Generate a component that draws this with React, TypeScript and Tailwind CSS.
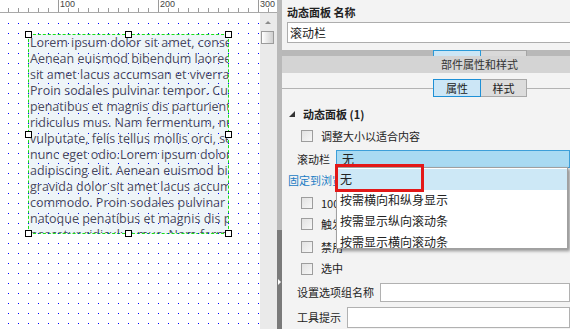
import React from 'react'

const cjk = '"Noto Sans CJK SC", "Noto Sans", sans-serif'

const loremLines = [
  'Lorem ipsum dolor sit amet, consectetur',
  'Aenean euismod bibendum laoreet. Proin',
  'sit amet lacus accumsan et viverra justo',
  'Proin sodales pulvinar tempor. Cum sociis',
  'penatibus et magnis dis parturient montes',
  'ridiculus mus. Nam fermentum, nulla luctus',
  'vulputate, felis tellus mollis orci, sed rhoncus',
  'nunc eget odio.Lorem ipsum dolor sit amet',
  'adipiscing elit. Aenean euismod bibendum',
  'gravida dolor sit amet lacus accumsan et',
  'commodo. Proin sodales pulvinar tempor',
  'natoque penatibus et magnis dis parturient',
  'nascetur ridiculus mus. Nam fermentum',
]

const dropdownItems = ['无', '按需横向和纵身显示', '按需显示纵向滚动条', '按需显示横向滚动条']

function Ruler() {
  const ticks = Array.from({ length: 27 }, (_, i) => 8 + i * 10)
  return (
    <div className="relative h-[13px] w-[277px] border-b border-[#a9a9a9] bg-white">
      <svg className="absolute inset-0" width={277} height={13} shapeRendering="crispEdges">
        {ticks.map((x) => {
          const long = (x - 58) % 100 === 0
          return (
            <line
              key={x}
              x1={x + 0.5}
              x2={x + 0.5}
              y1={long ? 0 : 8}
              y2={12}
              stroke="#9a9a9a"
              strokeWidth={1}
            />
          )
        })}
      </svg>
      {[100, 200, 300].map((n, i) => (
        <span
          key={n}
          className="absolute top-0 text-[9px] leading-[9px] text-[#444]"
          style={{ left: 60 + i * 100, fontFamily: '"Liberation Sans", sans-serif' }}
        >
          {n}
        </span>
      ))}
    </div>
  )
}

function Handle({ x, y }: { x: number; y: number }) {
  return (
    <div
      className="absolute h-[7px] w-[7px] border border-black bg-white"
      style={{ left: x - 3, top: y - 3 }}
    />
  )
}

function Canvas() {
  const cols = Array.from({ length: 26 }, (_, i) => 8 + i * 10)
  const rows = Array.from({ length: 31 }, (_, i) => 10 + i * 10)
  return (
    <div className="relative h-[316px] w-[260px] overflow-hidden bg-white">
      {/* text panel */}
      <div className="absolute left-[28px] top-[21px] h-[200px] w-[201px] overflow-hidden border border-dashed border-[#19e019] bg-[#eef5f8]">
        {loremLines.map((line) => (
          <div
            key={line}
            className="h-[16px] whitespace-nowrap pl-px text-[12.5px] leading-[16px] text-[#4c4c5e]"
            style={{ fontFamily: '"Open Sans", sans-serif' }}
          >
            {line}
          </div>
        ))}
      </div>

      {/* dot grid, drawn over the widget like the editor does */}
      <svg className="pointer-events-none absolute inset-0" width={260} height={316} shapeRendering="crispEdges">
        {rows.map((y) =>
          cols.map((x) => <rect key={`${x}-${y}`} x={x} y={y} width={1} height={1} fill="#0000ff" />)
        )}
      </svg>

      <Handle x={28} y={21} />
      <Handle x={128} y={21} />
      <Handle x={228} y={21} />
      <Handle x={28} y={121} />
      <Handle x={228} y={121} />
      <Handle x={28} y={220} />
      <Handle x={128} y={220} />
      <Handle x={228} y={220} />
    </div>
  )
}

function Scrollbar() {
  return (
    <div className="relative h-[316px] w-[17px] bg-[#eaeaea]">
      <div className="absolute left-[5px] top-[8px] h-0 w-0 border-x-[3px] border-b-[3px] border-x-transparent border-b-[#8a8a8a]" />
      <div className="absolute left-[1px] top-[18px] h-[13px] w-[13px] border border-[#9b9b9b] bg-gradient-to-r from-white to-[#cfcfcf]" />
    </div>
  )
}

function Checkbox() {
  return <div className="h-[12px] w-[12px] shrink-0 border border-[#9d9d9d] bg-gradient-to-br from-[#e2e2e2] to-[#f7f7f7]" />
}

function CheckRow({ label, h, mt = 0 }: { label: string; h: number; mt?: number }) {
  return (
    <div className="flex items-center gap-[8px] pl-[19px]" style={{ height: h, marginTop: mt }}>
      <Checkbox />
      <span className="whitespace-nowrap">{label}</span>
    </div>
  )
}

function RightPanel() {
  return (
    <div
      className="relative h-[329px] flex-1 overflow-hidden bg-[#f3f3f3] text-[11px] text-[#222]"
      style={{ fontFamily: cjk }}
    >
      {/* name section */}
      <div className="h-[50px] pl-[5px] pt-[3px]">
        <div className="h-[18px] font-bold leading-[18px]">动态面板 名称</div>
        <div className="mt-px h-[21px] w-[300px] border border-[#adadad] bg-white pl-[2px] text-[12px] leading-[19px]">
          滚动栏
        </div>
      </div>

      {/* grey band with peeking tabs */}
      <div className="flex h-[6px] bg-[#b8b8b8] pl-[151px]">
        <div className="h-[6px] w-[48px] border-x border-t border-[#2b9ad8] bg-[#cce6f5]" />
        <div className="h-[6px] w-[46px] border-r border-t border-[#a5a5a5] bg-[#d9d9d9]" />
      </div>

      {/* header */}
      <div className="h-[17px] bg-[#d4d4d4] pl-[159px] leading-[17px] text-[#333]">部件属性和样式</div>

      {/* tabs */}
      <div className="flex h-[24px]">
        <div className="h-[16px] w-[151px] border-b border-[#b3b3b3]" />
        <div className="mt-[6px] flex h-[18px] w-[48px] items-center justify-center border border-[#1e90d6] bg-[#cce6f6]">
          属性
        </div>
        <div className="mt-[6px] flex h-[18px] w-[46px] items-center justify-center border border-l-0 border-[#a8a8a8] bg-[#dcdcdc]">
          样式
        </div>
        <div className="h-[16px] flex-1 border-b border-[#b3b3b3]" />
      </div>

      {/* properties */}
      <div className="mt-[7px]">
        <div className="flex h-[20px] items-center pl-[7px] font-bold">
          <span className="mr-[8px] h-0 w-0 border-b-[6px] border-l-[6px] border-b-[#333] border-l-transparent" />
          动态面板 (1)
        </div>
        <CheckRow label="调整大小以适合内容" h={20} mt={2} />
        <div className="mt-[4px] flex h-[18px] items-center">
          <span className="w-[54px] pl-[15px]">滚动栏</span>
          <div className="h-[18px] flex-1 border border-[#3d9fd9] bg-[#a9daf2] pl-[5px] text-[12px] leading-[16px]">无</div>
        </div>
        <div className="mt-[2px] flex h-[20px] items-center whitespace-nowrap pl-[6px] text-[#1b7cc4]">固定到浏览器</div>
        <CheckRow label="100%宽度(仅限浏览器中有效)" h={20} mt={3} />
        <CheckRow label="触发鼠标交互" h={22} mt={0} />
        <CheckRow label="禁用" h={22} mt={1} />
        <CheckRow label="选中" h={21} mt={0} />
        <div className="mt-[4px] flex h-[19px] items-center">
          <span className="w-[98px] whitespace-nowrap pl-[15px]">设置选项组名称</span>
          <div className="h-[19px] flex-1 border border-[#b1b1b1] bg-white" />
        </div>
        <div className="mt-[5px] flex h-[21px] items-center">
          <span className="w-[65px] whitespace-nowrap pl-[15px]">工具提示</span>
          <div className="h-[21px] flex-1 border border-[#b1b1b1] bg-white" />
        </div>
      </div>

      {/* open dropdown */}
      <div className="absolute left-[54px] top-[167px] h-[82px] w-[232px] overflow-hidden border border-[#a0a0a0] bg-white pt-px text-[12px] shadow-[2px_2px_3px_rgba(0,0,0,0.4)]">
        {dropdownItems.map((item, i) => (
          <div
            key={item}
            className={`h-[21px] whitespace-nowrap pl-[3px] leading-[19px] ${i === 0 ? 'bg-[#cde8f6]' : ''}`}
          >
            {item}
          </div>
        ))}
      </div>
      {/* red highlight box */}
      <div className="pointer-events-none absolute left-[53px] top-[164px] h-[28px] w-[89px] border-[3px] border-[#e31818]" />
    </div>
  )
}

export default function App() {
  return (
    <div className="flex h-[329px] w-[570px] overflow-hidden bg-white">
      <div className="flex w-[277px] flex-col">
        <Ruler />
        <div className="flex">
          <Canvas />
          <Scrollbar />
        </div>
      </div>
      {/* splitter */}
      <div className="flex w-[5px] flex-col">
        <div className="h-[230px] bg-[#b9b9b9]" />
        <div className="relative flex-1 bg-[#7a7a7a]">
          <div className="absolute left-[1px] top-[49px] h-0 w-0 border-y-[3px] border-l-[3px] border-y-transparent border-l-white" />
        </div>
      </div>
      <RightPanel />
    </div>
  )
}
